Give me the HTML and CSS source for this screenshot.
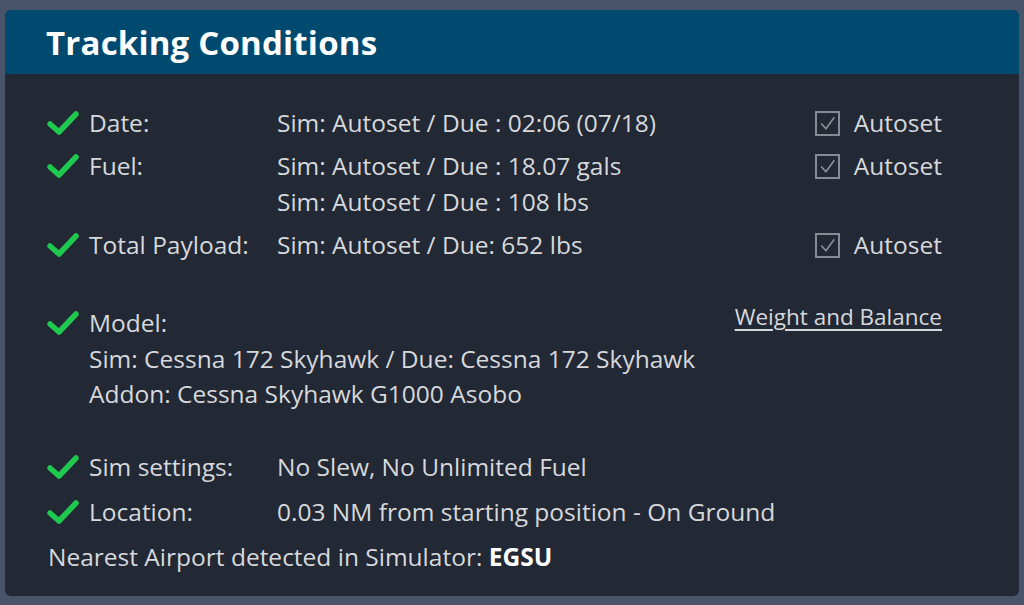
FILE: index.html
```html
<!DOCTYPE html>
<html lang="en">
<head>
<meta charset="UTF-8">
<title>Tracking Conditions</title>
<link rel="stylesheet" href="styles.css">
</head>
<body>
<div class="card">
	<div class="head">Tracking Conditions</div>
	<div class="body">
		<div class="row">
			<svg class="ok" viewBox="0 0 32 26"><path d="M3 14 L12 22 L29 4"/></svg>
			<span class="label">Date:</span>
			<div class="value">Sim: Autoset / Due : 02:06 (07/18)</div>
			<label class="auto"><span class="box"><svg viewBox="0 0 20 20"><path d="M4 10 L8.5 15 L16.5 4"/></svg></span>Autoset</label>
		</div>
		<div class="row">
			<svg class="ok" viewBox="0 0 32 26"><path d="M3 14 L12 22 L29 4"/></svg>
			<span class="label">Fuel:</span>
			<div class="value">Sim: Autoset / Due : 18.07 gals<br>Sim: Autoset / Due : 108 lbs</div>
			<label class="auto"><span class="box"><svg viewBox="0 0 20 20"><path d="M4 10 L8.5 15 L16.5 4"/></svg></span>Autoset</label>
		</div>
		<div class="row">
			<svg class="ok" viewBox="0 0 32 26"><path d="M3 14 L12 22 L29 4"/></svg>
			<span class="label">Total Payload:</span>
			<div class="value">Sim: Autoset / Due: 652 lbs</div>
			<label class="auto"><span class="box"><svg viewBox="0 0 20 20"><path d="M4 10 L8.5 15 L16.5 4"/></svg></span>Autoset</label>
		</div>
		<div class="row model">
			<svg class="ok" viewBox="0 0 32 26"><path d="M3 14 L12 22 L29 4"/></svg>
			<span class="label">Model:</span>
			<a class="link" href="#">Weight and Balance</a>
		</div>
		<div class="model-info">
			Sim: Cessna 172 Skyhawk / Due: Cessna 172 Skyhawk<br>
			Addon: Cessna Skyhawk G1000 Asobo
		</div>
		<div class="row settings">
			<svg class="ok" viewBox="0 0 32 26"><path d="M3 14 L12 22 L29 4"/></svg>
			<span class="label">Sim settings:</span>
			<div class="value">No Slew, No Unlimited Fuel</div>
		</div>
		<div class="row loc">
			<svg class="ok" viewBox="0 0 32 26"><path d="M3 14 L12 22 L29 4"/></svg>
			<span class="label">Location:</span>
			<div class="value">0.03 NM from starting position - On Ground</div>
		</div>
		<div class="nearest">Nearest Airport detected in Simulator: <b>EGSU</b></div>
	</div>
</div>
</body>
</html>
```

FILE: styles.css
```css
body {
	margin: 0;
	background: #48546a;
	font-family: "Open Sans", "Noto Sans", sans-serif;
}
.card {
	margin: 10px 5px 0;
	height: 586px;
	background: #222834;
	border-radius: 6px;
	overflow: hidden;
	color: #d6d8dc;
}
.head {
	height: 64px;
	padding-left: 41px;
	background: #004a70;
	color: #fff;
	font-weight: bold;
	font-size: 33px;
	line-height: 66px;
	letter-spacing: 0.2px;
}
.body {
	padding: 31px 77px 0 42px;
	font-size: 24.5px;
	line-height: 36px;
}
.row {
	display: grid;
	grid-template-columns: 42px 188px 1fr auto;
	align-items: start;
	margin-bottom: 7px;
}
.ok {
	width: 32px;
	height: 26px;
	margin-top: 5px;
}
.ok path {
	fill: none;
	stroke: #1fc94f;
	stroke-width: 5.5;
	stroke-linecap: round;
	stroke-linejoin: round;
}
.auto {
	display: flex;
	align-items: center;
	height: 36px;
	gap: 14px;
}
.box {
	width: 21px;
	height: 21px;
	border: 2px solid #878c94;
	display: flex;
}
.box svg {
	width: 21px;
	height: 21px;
}
.box path {
	fill: none;
	stroke: #8d929a;
	stroke-width: 1.5;
}
.model {
	margin-top: 42px;
	margin-bottom: 0;
}
.model .link {
	grid-column: 3 / 5;
	justify-self: end;
	color: #d6d8dc;
	font-size: 22.5px;
	text-decoration-thickness: 2px;
	text-underline-offset: 4px;
	margin-top: -6px;
}
.model-info {
	padding-left: 42px;
	line-height: 35px;
}
.settings {
	margin-top: 38px;
	margin-bottom: 9px;
}
.loc {
	margin-bottom: 9px;
}
.nearest {
	padding-left: 1px;
}
.nearest b {
	color: #fff;
}
```
